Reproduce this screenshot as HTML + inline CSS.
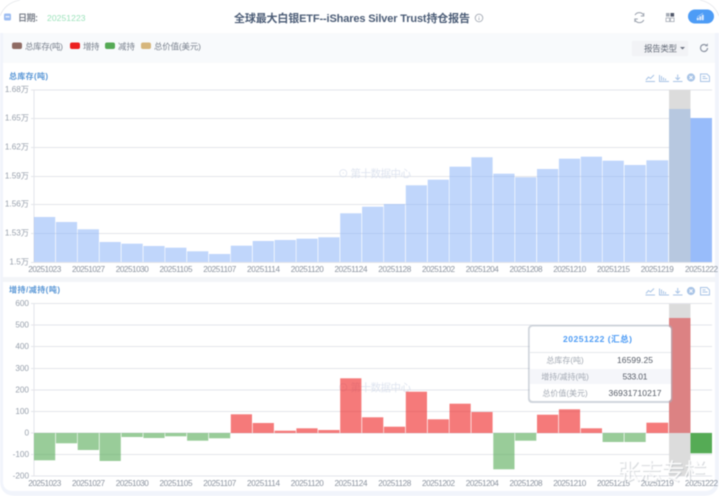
<!DOCTYPE html>
<html lang="zh">
<head>
<meta charset="utf-8">
<title>全球最大白银ETF--iShares Silver Trust持仓报告</title>
<style>
html,body{margin:0;padding:0;width:719px;height:496px;overflow:hidden;background:#fff}
svg{display:block;filter:blur(.5px)}
text{font-family:"Liberation Sans","Noto Sans CJK SC",sans-serif}
.x text{font-size:8.2px;fill:#8a929e;text-anchor:middle}
.y text{font-size:8.2px;fill:#98a0ac;text-anchor:end}
.g line{stroke:#e3e5ea;stroke-width:1}
.b rect{fill:rgba(140,180,247,.55)}
.r{fill:rgba(238,34,34,.6)}
.n{fill:rgba(85,170,85,.6)}
.l text{font-size:8.5px;fill:#7b838f}
.t{font-size:8px;font-weight:700;fill:#5a97d6}
.i *{fill:none;stroke:#a9c4e6;stroke-width:1}
.w{font-size:10.5px;fill:#d3dbea;opacity:.75}
.tl{font-size:8px;fill:#a3a9b3;text-anchor:middle}
.tv{font-size:8.5px;fill:#555b66;text-anchor:middle}
</style>
</head>
<body>
<svg width="719" height="496" viewBox="0 0 719 496" xmlns="http://www.w3.org/2000/svg">
<defs>
<g id="tb" class="i">
<path d="M645.500 81.500H655M646 80l2.500-3 2 1.500 3.500-3.500"/>
<path d="M659.500 75v6.500H669M661.500 80.500v-4.500M663.500 80.500v-3M665.500 80.500v-2"/>
<path d="M673 81.500h9.500M677.700 74.500v5M675.500 77.500l2.200 2.200 2.200-2.200"/>
<circle cx="691" cy="77.500" r="3.600" style="fill:#a9c4e6;stroke:#a9c4e6"/>
<path d="M689.500 76l3 3M692.500 76l-3 3" style="stroke:#fff"/>
<path d="M700.500 74h6.500l2.500 2.500v5h-9zM702.500 76.500h3M702.500 78.500h5"/>
</g>
</defs>

<rect width="719" height="496" fill="#fff"/>
<path d="M0 16Q5 3 20 0" fill="none" stroke="#e4e6ea" stroke-width=".8"/>
<path d="M700 0Q714 3 719 16" fill="none" stroke="#e4e6ea" stroke-width=".8"/>

<!-- container background -->
<path d="M0 33H719V480Q719 496 703 496H16Q0 496 0 480Z" fill="#f1f4fb"/>
<rect x="3" y="33" width="712" height="30" fill="#f8fafc"/>
<rect x="3" y="63" width="712" height="214" fill="#fff"/>
<rect x="3" y="277" width="712" height="5" fill="#f3f5f8"/>
<path d="M3 282H715V481Q715 491 705 491H13Q3 491 3 481Z" fill="#fff"/>

<!-- header -->
<rect x="4" y="13.500" width="7" height="7" rx="1.500" fill="#9dbdf2"/>
<rect x="5.500" y="16" width="4" height="1.500" fill="#e8effc"/>
<text x="18" y="21" font-size="9" font-weight="700" fill="#7b818c" textLength="20">日期:</text>
<text x="47" y="21" font-size="8.500" fill="#9ce2bb" textLength="38.500">20251223</text>
<text x="234" y="22" font-size="11" font-weight="700" fill="#4b5c76" textLength="236">全球最大白银ETF--iShares Silver Trust持仓报告</text>
<circle cx="479" cy="18" r="3.800" fill="none" stroke="#a5abb5" stroke-width=".9"/>
<path d="M479 16.500v.8M479 18v2" stroke="#a5abb5" stroke-width=".9"/>
<path d="M635 15a5 5 0 0 1 8.500 0M643.800 20a5 5 0 0 1-8.800 0" fill="none" stroke="#9aa1ad" stroke-width="1.100"/>
<path d="M643.800 13v3h-3M634.800 22v-3h3" fill="none" stroke="#9aa1ad" stroke-width=".9"/>
<rect x="666" y="13" width="3.600" height="3.600" fill="#a5abb5"/>
<rect x="670.500" y="13" width="3.600" height="3.600" fill="#51586a"/>
<rect x="666" y="18" width="3.600" height="3.600" fill="none" stroke="#a5abb5" stroke-width=".8"/>
<rect x="670.500" y="18" width="3.600" height="3.600" fill="none" stroke="#a5abb5" stroke-width=".8"/>
<rect x="688" y="9.500" width="26" height="14" rx="7" fill="#4d9cf6"/>
<path d="M697 20v-2h1.500v2zM699.500 20v-3.500h1.500v3.500zM702 20v-5h1.500v5zM697 17l3-2 3-2" fill="#dbe9fd" stroke="#dbe9fd" stroke-width=".5"/>

<!-- legend -->
<rect x="12" y="42.500" width="10" height="6.500" rx="2" fill="#8f6b63"/>
<rect x="70" y="42.500" width="10" height="6.500" rx="2" fill="#ec2020"/>
<rect x="105" y="42.500" width="10" height="6.500" rx="2" fill="#55aa55"/>
<rect x="141" y="42.500" width="10" height="6.500" rx="2" fill="#d6b67c"/>
<g class="l">
<text x="25" y="49.500" textLength="38">总库存(吨)</text>
<text x="83" y="49.500" textLength="16.500">增持</text>
<text x="118" y="49.500" textLength="17">减持</text>
<text x="154" y="49.500" textLength="47">总价值(美元)</text>
</g>

<!-- report type -->
<rect x="632" y="41" width="56" height="15" fill="#f2f3f6"/>
<text x="644" y="51.500" font-size="8.500" fill="#666d7a" textLength="33">报告类型</text>
<path d="M680 47h5l-2.500 2.500z" fill="#6b7280"/>
<path d="M707.500 48a3.500 3.500 0 1 1-1.300-2.700" fill="none" stroke="#8d95a3" stroke-width="1.200"/>
<path d="M707.800 43.300v3h-3z" fill="#8d95a3"/>

<!-- chart 1 -->
<text class="t" x="9" y="79" textLength="39">总库存(吨)</text>
<use href="#tb"/>
<g class="g">
<line x1="31" y1="90" x2="712" y2="90"/>
<line x1="31" y1="118.500" x2="712" y2="118.500"/>
<line x1="31" y1="147.500" x2="712" y2="147.500"/>
<line x1="31" y1="176.500" x2="712" y2="176.500"/>
<line x1="31" y1="204.500" x2="712" y2="204.500"/>
<line x1="31" y1="233.500" x2="712" y2="233.500"/>
<line x1="31" y1="262.500" x2="712" y2="262.500"/>
<line x1="34" y1="90" x2="34" y2="262"/>
</g>
<g class="y">
<text x="29" y="92" >1.68万</text>
<text x="29" y="120.500">1.65万</text>
<text x="29" y="149.500">1.62万</text>
<text x="29" y="178.500">1.59万</text>
<text x="29" y="206.500">1.56万</text>
<text x="29" y="235.500">1.53万</text>
<text x="29" y="264.500">1.5万</text>
</g>
<rect x="669" y="90" width="21.500" height="172" fill="#dcdcdc"/>
<text class="w" x="338" y="177" textLength="73">⊙ 第十数据中心</text>
<g class="b">
<rect x="34" y="217" width="21.200" height="45"/>
<rect x="55.900" y="222" width="21.200" height="40"/>
<rect x="77.700" y="229.300" width="21.200" height="32.700"/>
<rect x="99.600" y="242" width="21.200" height="20"/>
<rect x="121.500" y="243.700" width="21.200" height="18.300"/>
<rect x="143.400" y="246" width="21.200" height="16"/>
<rect x="165.200" y="247.700" width="21.200" height="14.300"/>
<rect x="187.100" y="251.300" width="21.200" height="10.700"/>
<rect x="209" y="254" width="21.200" height="8"/>
<rect x="230.800" y="245.700" width="21.200" height="16.300"/>
<rect x="252.700" y="241" width="21.200" height="21"/>
<rect x="274.600" y="240" width="21.200" height="22"/>
<rect x="296.400" y="238.700" width="21.200" height="23.300"/>
<rect x="318.300" y="237.300" width="21.200" height="24.700"/>
<rect x="340.200" y="213.300" width="21.200" height="48.700"/>
<rect x="362.100" y="206.700" width="21.200" height="55.300"/>
<rect x="383.900" y="204" width="21.200" height="58"/>
<rect x="405.800" y="185.300" width="21.200" height="76.700"/>
<rect x="427.700" y="179.700" width="21.200" height="82.300"/>
<rect x="449.500" y="166.700" width="21.200" height="95.300"/>
<rect x="471.400" y="157.300" width="21.200" height="104.700"/>
<rect x="493.300" y="173.700" width="21.200" height="88.300"/>
<rect x="515.100" y="177.300" width="21.200" height="84.700"/>
<rect x="537" y="169" width="21.200" height="93"/>
<rect x="558.900" y="158.700" width="21.200" height="103.300"/>
<rect x="580.800" y="156.700" width="21.200" height="105.300"/>
<rect x="602.600" y="160.700" width="21.200" height="101.300"/>
<rect x="624.500" y="165" width="21.200" height="97"/>
<rect x="646.400" y="160.300" width="21.800" height="101.700"/>
</g>
<rect x="669" y="109" width="21.500" height="153" fill="#b7c8e0"/>
<rect x="690.500" y="118" width="21.500" height="144" fill="#98bcfa"/>
<g class="x">
<text x="44.800" y="272" textLength="33">20251023</text>
<text x="88.500" y="272" textLength="33">20251027</text>
<text x="132.300" y="272" textLength="33">20251030</text>
<text x="176" y="272" textLength="33">20251105</text>
<text x="219.800" y="272" textLength="33">20251107</text>
<text x="263.500" y="272" textLength="33">20251114</text>
<text x="307.300" y="272" textLength="33">20251120</text>
<text x="351" y="272" textLength="33">20251124</text>
<text x="394.800" y="272" textLength="33">20251128</text>
<text x="438.500" y="272" textLength="33">20251202</text>
<text x="482.300" y="272" textLength="33">20251204</text>
<text x="526" y="272" textLength="33">20251208</text>
<text x="569.800" y="272" textLength="33">20251210</text>
<text x="613.500" y="272" textLength="33">20251215</text>
<text x="657.300" y="272" textLength="33">20251219</text>
<text x="701.500" y="272" textLength="33">20251222</text>
</g>

<!-- chart 2 -->
<text class="t" x="9" y="292.500" textLength="51">增持/减持(吨)</text>
<use href="#tb" y="213.500"/>
<g class="g">
<line x1="31" y1="303.500" x2="712" y2="303.500"/>
<line x1="31" y1="325" x2="712" y2="325"/>
<line x1="31" y1="346.500" x2="712" y2="346.500"/>
<line x1="31" y1="368.500" x2="712" y2="368.500"/>
<line x1="31" y1="390" x2="712" y2="390"/>
<line x1="31" y1="411.500" x2="712" y2="411.500"/>
<line x1="31" y1="433" x2="712" y2="433"/>
<line x1="31" y1="454.500" x2="712" y2="454.500"/>
<line x1="31" y1="476" x2="712" y2="476"/>
<line x1="34" y1="303" x2="34" y2="476"/>
</g>
<g class="y">
<text x="29" y="306">600</text>
<text x="29" y="327.500">500</text>
<text x="29" y="349">400</text>
<text x="29" y="371">300</text>
<text x="29" y="392.500">200</text>
<text x="29" y="414">100</text>
<text x="29" y="435.500">0</text>
<text x="29" y="457">-100</text>
<text x="29" y="478.500">-200</text>
</g>
<rect x="669" y="304" width="21.500" height="172" fill="#dcdcdc"/>
<text class="w" x="338" y="391" textLength="73">⊙ 第十数据中心</text>
<g class="n">
<rect x="34" y="433" width="21.200" height="27.300"/>
<rect x="55.900" y="433" width="21.200" height="10.300"/>
<rect x="77.700" y="433" width="21.200" height="17"/>
<rect x="99.600" y="433" width="21.200" height="28"/>
<rect x="121.500" y="433" width="21.200" height="4"/>
<rect x="143.400" y="433" width="21.200" height="5"/>
<rect x="165.200" y="433" width="21.200" height="3.300"/>
<rect x="187.100" y="433" width="21.200" height="7.700"/>
<rect x="209" y="433" width="21.200" height="5.300"/>
<rect x="493.300" y="433" width="21.200" height="36.300"/>
<rect x="515.100" y="433" width="21.200" height="7.700"/>
<rect x="602.600" y="433" width="21.200" height="9"/>
<rect x="624.500" y="433" width="21.200" height="9"/>
</g>
<g class="r">
<rect x="230.800" y="414.300" width="21.200" height="18.700"/>
<rect x="252.700" y="423" width="21.200" height="10"/>
<rect x="274.600" y="430.700" width="21.200" height="2.300"/>
<rect x="296.400" y="428.300" width="21.200" height="4.700"/>
<rect x="318.300" y="430" width="21.200" height="3"/>
<rect x="340.200" y="378.300" width="21.200" height="54.700"/>
<rect x="362.100" y="417.300" width="21.200" height="15.700"/>
<rect x="383.900" y="426.700" width="21.200" height="6.300"/>
<rect x="405.800" y="391.700" width="21.200" height="41.300"/>
<rect x="427.700" y="419.300" width="21.200" height="13.700"/>
<rect x="449.500" y="403.700" width="21.200" height="29.300"/>
<rect x="471.400" y="412" width="21.200" height="21"/>
<rect x="537" y="414.700" width="21.200" height="18.300"/>
<rect x="558.900" y="409.300" width="21.200" height="23.700"/>
<rect x="580.800" y="428.300" width="21.200" height="4.700"/>
<rect x="646.400" y="422.700" width="21.800" height="10.300"/>
</g>
<rect x="669" y="318" width="21.500" height="115" fill="#dc8283"/>
<rect x="690.500" y="433" width="21.500" height="20.300" fill="#55ab55"/>
<g class="x">
<text x="44.800" y="486" textLength="33">20251023</text>
<text x="88.500" y="486" textLength="33">20251027</text>
<text x="132.300" y="486" textLength="33">20251030</text>
<text x="176" y="486" textLength="33">20251105</text>
<text x="219.800" y="486" textLength="33">20251107</text>
<text x="263.500" y="486" textLength="33">20251114</text>
<text x="307.300" y="486" textLength="33">20251120</text>
<text x="351" y="486" textLength="33">20251124</text>
<text x="394.800" y="486" textLength="33">20251128</text>
<text x="438.500" y="486" textLength="33">20251202</text>
<text x="482.300" y="486" textLength="33">20251204</text>
<text x="526" y="486" textLength="33">20251208</text>
<text x="569.800" y="486" textLength="33">20251210</text>
<text x="613.500" y="486" textLength="33">20251215</text>
<text x="657.300" y="486" textLength="33">20251219</text>
<text x="701.500" y="486" textLength="33">20251222</text>
</g>

<!-- tooltip -->
<rect x="528" y="325" width="144.500" height="78" rx="4" fill="#a9b2c0" opacity=".55"/>
<rect x="529.700" y="326.500" width="141.300" height="74.500" rx="3" fill="#fff"/>
<text x="597.500" y="342" font-size="8.500" font-weight="700" fill="#4c9bf5" text-anchor="middle" textLength="69">20251222 (汇总)</text>
<line x1="530" y1="352.500" x2="671" y2="352.500" stroke="#e6e8ec"/>
<rect x="530" y="369" width="141" height="15" fill="#f5f6fa"/>
<text class="tl" x="565" y="363">总库存(吨)</text>
<text class="tv" x="635" y="363" textLength="36">16599.25</text>
<text class="tl" x="565" y="379.500">增持/减持(吨)</text>
<text class="tv" x="635" y="379.500" textLength="25">533.01</text>
<text class="tl" x="565" y="396">总价值(美元)</text>
<text class="tv" x="635" y="396" textLength="53">36931710217</text>

<!-- corner watermark -->
<text x="618" y="480.500" font-size="23" fill="#aab0b8" opacity=".45" textLength="90">张志专栏</text>
<text x="617" y="479.500" font-size="23" fill="#fff" opacity=".88" textLength="90">张志专栏</text>
</svg>
</body>
</html>
